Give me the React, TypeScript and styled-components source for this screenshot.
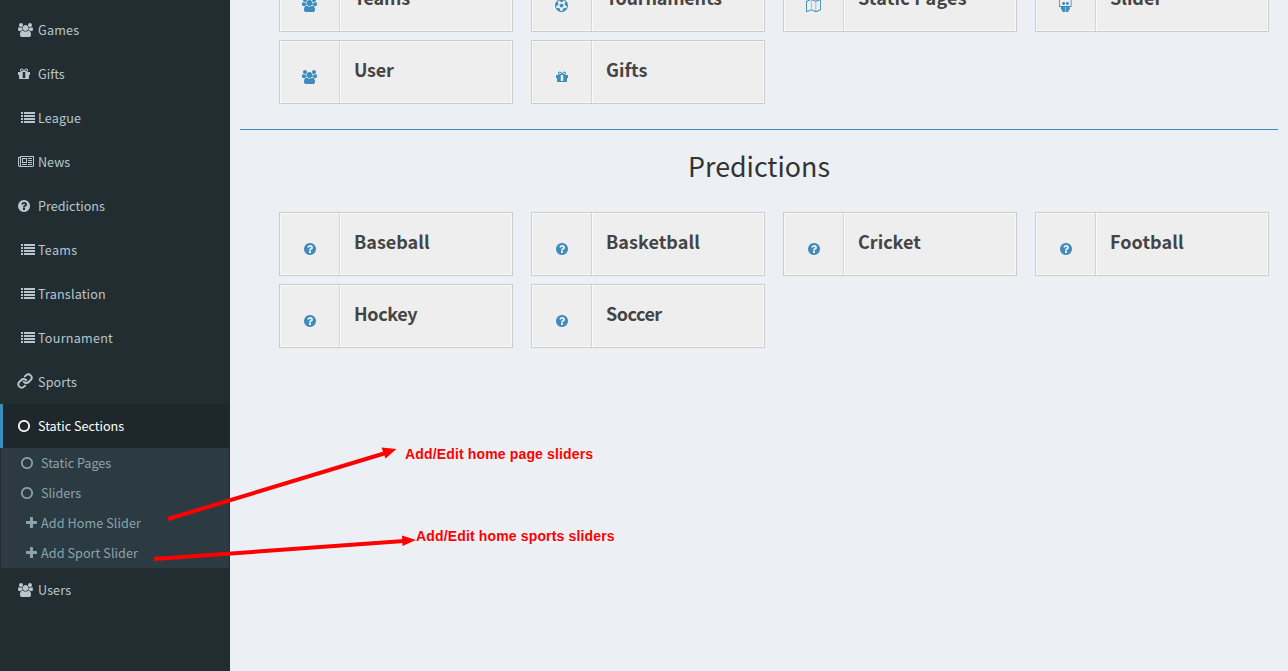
import React from "react";
import styled, { createGlobalStyle } from "styled-components";
import { Link } from "lucide-react";

const GlobalStyle = createGlobalStyle`
  * { box-sizing: border-box; }
  body {
    margin: 0;
    overflow: hidden;
    background: #ecf0f5;
    font-family: "Noto Sans CJK SC", "Noto Sans", sans-serif;
  }
`;

interface GlyphShape {
  w: number;
  d: string;
  size?: number;
}

const GLYPHS = {
  users: {
    w: 1920,
    d: "M593 640q-162 -5 -265 -128h-134q-82 0 -138 40.5t-56 118.5q0 353 124 353q6 0 43.5 -21t97.5 -42.5t119 -21.5q67 0 133 23q-5 -37 -5 -66q0 -143 81 -256zM1664 3q0 -121 -73 -190t-194 -69h-874q-121 0 -194 69t-73 190q0 53 3.5 103.5t14 109t26.5 108.5t43 97.5t62 81t85.5 53.5t111.5 20q10 0 43 -21.5t73 -48t107 -48t135 -21.5t135 21.5t107 48t73 48t43 21.5q61 0 111.5 -20t85.5 -53.5t62 -81t43 -97.5t26.5 -108.5t14 -109t3.5 -103.5zM640 1280q0 -106 -75 -181t-181 -75t-181 75t-75 181t75 181t181 75t181 -75t75 -181zM1344 896q0 -159 -112.5 -271.5t-271.5 -112.5t-271.5 112.5t-112.5 271.5t112.5 271.5t271.5 112.5t271.5 -112.5t112.5 -271.5zM1920 671q0 -78 -56 -118.5t-138 -40.5h-134q-103 123 -265 128q81 113 81 256q0 29 -5 66q66 -23 133 -23q59 0 119 21.5t97.5 42.5t43.5 21q124 0 124 -353zM1792 1280q0 -106 -75 -181t-181 -75t-181 75t-75 181t75 181t181 75t181 -75t75 -181z",
  },
  gift: {
    w: 1536,
    d: "M928 180v56v468v192h-320v-192v-468v-56q0 -25 18 -38.5t46 -13.5h192q28 0 46 13.5t18 38.5zM472 1024h195l-126 161q-26 31 -69 31q-40 0 -68 -28t-28 -68t28 -68t68 -28zM1160 1120q0 40 -28 68t-68 28q-43 0 -69 -31l-125 -161h194q40 0 68 28t28 68zM1536 864v-320q0 -14 -9 -23t-23 -9h-96v-416q0 -40 -28 -68t-68 -28h-1088q-40 0 -68 28t-28 68v416h-96q-14 0 -23 9t-9 23v320q0 14 9 23t23 9h440q-93 0 -158.5 65.5t-65.5 158.5t65.5 158.5t158.5 65.5q107 0 168 -77l128 -165l128 165q61 77 168 77q93 0 158.5 -65.5t65.5 -158.5t-65.5 -158.5t-158.5 -65.5h440q14 0 23 -9t9 -23z",
  },
  list: {
    w: 1792,
    d: "M0 0h256v256h-256zM384 0h1408v256h-1408zM0 384h256v256h-256zM384 384h1408v256h-1408zM0 768h256v256h-256zM384 768h1408v256h-1408zM0 1152h256v256h-256zM384 1152h1408v256h-1408z",
  },
  news: {
    w: 2048,
    d: "M1024 1024h-384v-384h384v384zM1152 384v-128h-640v128h640zM1152 1152v-640h-640v640h640zM1792 384v-128h-512v128h512zM1792 640v-128h-512v128h512zM1792 896v-128h-512v128h512zM1792 1152v-128h-512v128h512zM256 192v960h-128v-960q0 -26 19 -45t45 -19t45 19t19 45zM1920 192v1088h-1536v-1088q0 -33 -11 -64h1483q26 0 45 19t19 45zM2048 1408v-1216q0 -80 -56 -136t-136 -56h-1664q-80 0 -136 56t-56 136v1088h256v128h1792z",
  },
  question: {
    w: 1536,
    d: "M896 160v192q0 14 -9 23t-23 9h-192q-14 0 -23 -9t-9 -23v-192q0 -14 9 -23t23 -9h192q14 0 23 9t9 23zM1152 832q0 88 -55.5 163t-138.5 116t-170 41q-243 0 -371 -213q-15 -24 8 -42l132 -100q7 -6 19 -6q16 0 25 12q53 68 86 92q34 24 86 24q48 0 85.5 -26t37.5 -59q0 -38 -20 -61t-68 -45q-63 -28 -115.5 -86.5t-52.5 -125.5v-36q0 -14 9 -23t23 -9h192q14 0 23 9t9 23q0 19 21.5 49.5t54.5 49.5q32 18 49 28.5t46 35t44.5 48t28 60.5t12.5 81zM1536 640q0 -209 -103 -385.5t-279.5 -279.5t-385.5 -103t-385.5 103t-279.5 279.5t-103 385.5t103 385.5t279.5 279.5t385.5 103t385.5 -103t279.5 -279.5t103 -385.5z",
  },
  circle: {
    w: 1536,
    d: "M768 1184q-148 0 -273 -73t-198 -198t-73 -273t73 -273t198 -198t273 -73t273 73t198 198t73 273t-73 273t-198 198t-273 73zM1536 640q0 -209 -103 -385.5t-279.5 -279.5t-385.5 -103t-385.5 103t-279.5 279.5t-103 385.5t103 385.5t279.5 279.5t385.5 103t385.5 -103t279.5 -279.5t103 -385.5z",
  },
  plus: {
    w: 1408,
    d: "M1408 800v-192q0 -40 -28 -68t-68 -28h-416v-416q0 -40 -28 -68t-68 -28h-192q-40 0 -68 28t-28 68v416h-416q-40 0 -68 28t-28 68v192q0 40 28 68t68 28h416v416q0 40 28 68t68 28h192q40 0 68 -28t28 -68v-416h416q40 0 68 -28t28 -68z",
  },
  ball: {
    w: 1792,
    size: 13,
    d: "M609 720l287 208l287 -208l-109 -336h-355zM896 1536q182 0 348 -71t286 -191t191 -286t71 -348t-71 -348t-191 -286t-286 -191t-348 -71t-348 71t-286 191t-191 286t-71 348t71 348t191 286t286 191t348 71zM1515 185q149 203 149 454v3l-102 -89l-240 224l63 323l134 -12q-150 206 -389 282l53 -124l-287 -159l-287 159l53 124q-239 -76 -389 -282l135 12l62 -323l-240 -224l-102 89v-3q0 -251 149 -454l30 132l326 -40l139 -298l-116 -69q117 -39 240 -39t240 39l-116 69l139 298l326 40z",
  },
  map: {
    w: 2048,
    size: 13.2,
    d: "M2020 1525q28 -20 28 -53v-1408q0 -20 -11 -36t-29 -23l-640 -256q-24 -11 -48 0l-616 246l-616 -246q-10 -5 -24 -5q-19 0 -36 11q-28 20 -28 53v1408q0 20 11 36t29 23l640 256q24 11 48 0l616 -246l616 246q32 13 60 -6zM736 1390v-1270l576 -230v1270zM128 1173v-1270l544 217v1270zM1920 107v1270l-544 -217v-1270z",
  },
  swing: {
    w: 1664,
    d: "M0 384h256v-330l160 -90v-220h364v640h72v-640h364v220l160 90v330h228v1000h-100v-870h-1404v870h-100zM400 832a190 190 0 1 0 380 0a190 190 0 1 0 -380 0zM880 832a190 190 0 1 0 380 0a190 190 0 1 0 -380 0z",
  },
} satisfies Record<string, GlyphShape>;

type GlyphName = keyof typeof GLYPHS;
type IconName = GlyphName | "link";

const GlyphSvg = styled.svg`
  display: block;
  flex: none;
  fill: currentColor;
`;

const ChainIcon = styled(Link)`
  display: block;
  flex: none;
  margin: -2px 0 0 -1.5px;
`;

/* Glyph outlines use a y-up em square: 1792 units tall, 14px at the default size. */
const Glyph = ({ name }: { name: IconName }) => {
  if (name === "link") return <ChainIcon size={16} strokeWidth={2.8} />;
  const { w, d, size = 14 }: GlyphShape = GLYPHS[name];
  return (
    <GlyphSvg width={(w / 1792) * size} height={size} viewBox={`0 0 ${w} 1792`}>
      <path transform="matrix(1 0 0 -1 0 1536)" d={d} />
    </GlyphSvg>
  );
};

const Shell = styled.div`
  position: relative;
  display: flex;
  width: 1288px;
  height: 671px;
  overflow: hidden;
`;

const Sidebar = styled.nav`
  width: 230px;
  flex: none;
  padding-top: 8px;
  background: #222d32;
`;

const NavItem = styled.a<{ $active?: boolean }>`
  display: flex;
  align-items: center;
  height: 44px;
  padding-left: 15px;
  border-left: 3px solid ${(p) => (p.$active ? "#3c8dbc" : "transparent")};
  background: ${(p) => (p.$active ? "#1e282c" : "transparent")};
  color: ${(p) => (p.$active ? "#ffffff" : "#b8c7ce")};
`;

const IconSlot = styled.span<{ $width: number; $indent?: number }>`
  display: flex;
  flex: none;
  width: ${(p) => p.$width}px;
  padding-left: ${(p) => p.$indent ?? 0}px;
`;

const Label = styled.span<{ $spacing?: number }>`
  font-size: 12.6px;
  line-height: 20px;
  letter-spacing: ${(p) => p.$spacing ?? 0}px;
  white-space: nowrap;
`;

const SubMenu = styled.div`
  margin: 0 1px;
  background: #2c3b41;
`;

const SubItem = styled.a`
  display: flex;
  align-items: center;
  height: 30px;
  padding-left: 20px;
  color: #8aa4af;
`;

const Content = styled.main`
  flex: 1;
  padding: 0 10px;
`;

const CardGrid = styled.div<{ $offset?: number }>`
  display: grid;
  grid-template-columns: repeat(4, 234px);
  gap: 8px 18px;
  margin-left: 39px;
  margin-top: ${(p) => p.$offset ?? 0}px;
`;

const Card = styled.a`
  display: flex;
  height: 64px;
  border: 1px solid #cccccc;
  background: #eeeeee;
  box-shadow: inset 0 0 0 1px #f9f9f9;
`;

const CardIcon = styled.span`
  display: flex;
  align-items: flex-end;
  justify-content: center;
  width: 60px;
  padding-bottom: 19px;
  border-right: 1px solid #d5d5d5;
  color: #3c8dbc;
`;

const CardTitle = styled.span<{ $spacing?: number }>`
  flex: 1;
  margin: 1px 0;
  padding: 13px 0 0 13px;
  border-left: 1px solid #fcfcfc;
  color: #444444;
  font-size: 18px;
  font-weight: 700;
  line-height: 28px;
  letter-spacing: ${(p) => p.$spacing ?? 0}px;
  white-space: nowrap;
`;

const Divider = styled.hr`
  height: 1px;
  margin: 25px 0 0;
  border: 0;
  background: #3c8dbc;
`;

const SectionTitle = styled.h2`
  height: 33px;
  margin: 19px 0 30px;
  color: #333333;
  font-size: 26.8px;
  font-weight: 400;
  line-height: 33px;
  text-align: center;
`;

const Arrows = styled.svg`
  position: absolute;
  left: 0;
  top: 0;
  pointer-events: none;
`;

const Note = styled.span<{ $x: number; $y: number }>`
  position: absolute;
  left: ${(p) => p.$x}px;
  top: ${(p) => p.$y}px;
  color: #ff0000;
  font: 700 14px/16px "Liberation Sans", Arial, sans-serif;
  letter-spacing: 0.15px;
  white-space: nowrap;
`;

interface Entry {
  icon: IconName;
  text: string;
  spacing?: number;
}

const MENU: Entry[] = [
  { icon: "users", text: "Games", spacing: 0.2 },
  { icon: "gift", text: "Gifts" },
  { icon: "list", text: "League", spacing: 0.13 },
  { icon: "news", text: "News" },
  { icon: "question", text: "Predictions", spacing: 0.03 },
  { icon: "list", text: "Teams", spacing: 0.25 },
  { icon: "list", text: "Translation", spacing: 0.16 },
  { icon: "list", text: "Tournament", spacing: 0.25 },
  { icon: "link", text: "Sports", spacing: 0.13 },
];

const SUBMENU: Entry[] = [
  { icon: "circle", text: "Static Pages" },
  { icon: "circle", text: "Sliders" },
  { icon: "plus", text: "Add Home Slider", spacing: 0.1 },
  { icon: "plus", text: "Add Sport Slider", spacing: 0.08 },
];

const SECTIONS: Entry[] = [
  { icon: "users", text: "Teams", spacing: -0.2 },
  { icon: "ball", text: "Tournaments", spacing: -0.22 },
  { icon: "map", text: "Static Pages", spacing: 0.2 },
  { icon: "swing", text: "Slider" },
  { icon: "users", text: "User", spacing: -0.25 },
  { icon: "gift", text: "Gifts" },
];

const SPORTS: Entry[] = [
  { icon: "question", text: "Baseball" },
  { icon: "question", text: "Basketball", spacing: 0.06 },
  { icon: "question", text: "Cricket" },
  { icon: "question", text: "Football", spacing: 0.08 },
  { icon: "question", text: "Hockey", spacing: -0.35 },
  { icon: "question", text: "Soccer", spacing: -0.5 },
];

const MenuRow = ({ icon, text, spacing, active }: Entry & { active?: boolean }) => (
  <NavItem $active={active}>
    <IconSlot $width={20} $indent={icon === "list" ? 3 : 0}>
      <Glyph name={icon} />
    </IconSlot>
    <Label $spacing={spacing}>{text}</Label>
  </NavItem>
);

const Cards = ({ items, offset }: { items: Entry[]; offset?: number }) => (
  <CardGrid $offset={offset}>
    {items.map(({ icon, text, spacing }) => (
      <Card key={text}>
        <CardIcon>
          <Glyph name={icon} />
        </CardIcon>
        <CardTitle $spacing={spacing}>{text}</CardTitle>
      </Card>
    ))}
  </CardGrid>
);

export default function App() {
  return (
    <>
      <GlobalStyle />
      <Shell>
        <Sidebar>
          {MENU.map((item) => (
            <MenuRow key={item.text} {...item} />
          ))}
          <MenuRow icon="circle" text="Static Sections" active />
          <SubMenu>
            {SUBMENU.map(({ icon, text, spacing }) => (
              <SubItem key={text}>
                <IconSlot $width={20} $indent={icon === "plus" ? 5 : 0}>
                  <Glyph name={icon} />
                </IconSlot>
                <Label $spacing={spacing}>{text}</Label>
              </SubItem>
            ))}
          </SubMenu>
          <MenuRow icon="users" text="Users" spacing={0.1} />
        </Sidebar>
        <Content>
          <Cards items={SECTIONS} offset={-32} />
          <Divider />
          <SectionTitle>Predictions</SectionTitle>
          <Cards items={SPORTS} />
        </Content>
        <Arrows width="1288" height="671" viewBox="0 0 1288 671">
          <g stroke="#ff0000" strokeWidth="4" fill="#ff0000">
            <path d="M168 519L384 453.5" />
            <path d="M154 559L404 541" />
            <path stroke="none" d="M396.5 449L381.5 447.5L385.5 458.5Z" />
            <path stroke="none" d="M416 540L402 535.5L402.5 546Z" />
          </g>
        </Arrows>
        <Note $x={405} $y={446}>Add/Edit home page sliders</Note>
        <Note $x={416} $y={528}>Add/Edit home sports sliders</Note>
      </Shell>
    </>
  );
}
